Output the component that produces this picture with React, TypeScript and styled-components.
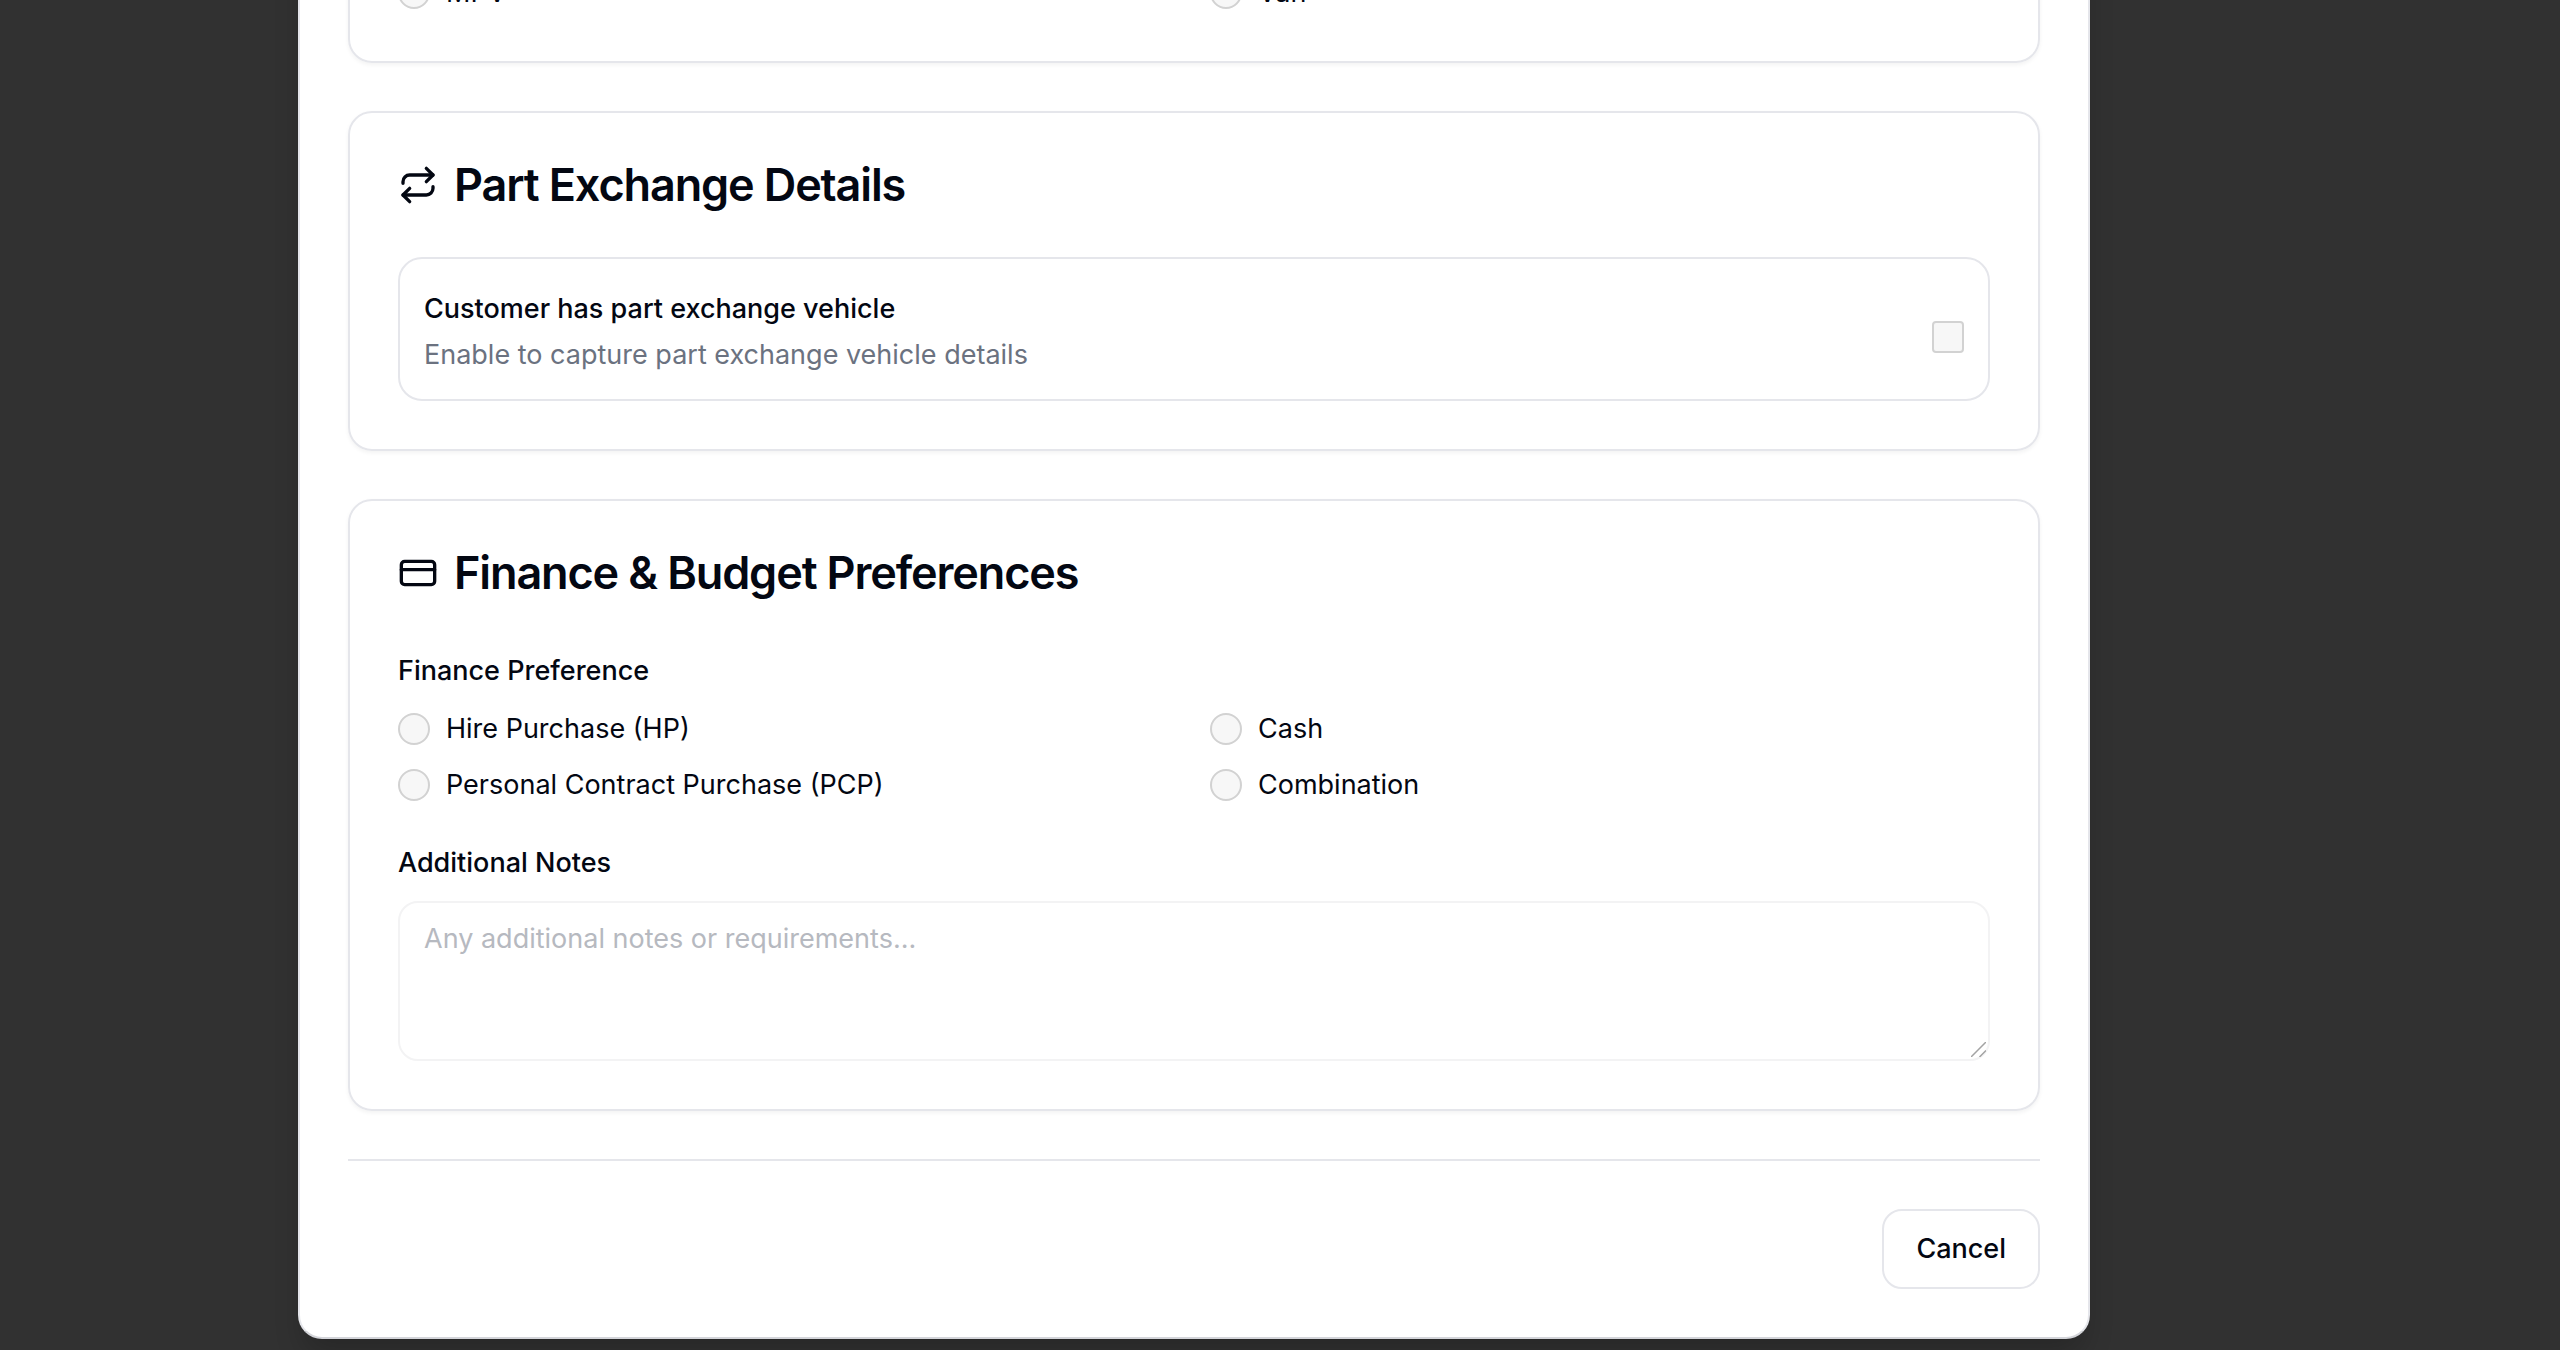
import React, { useId } from "react";
import styled, { createGlobalStyle } from "styled-components";
import { CreditCard, Repeat } from "lucide-react";

const colors = {
  text: "#030712",
  muted: "#6b7280",
  placeholder: "#b6b9c0",
  border: "#e5e6eb",
  dialogEdge: "#d4d5da",
  inputBorder: "#f3f3f4",
  controlBorder: "#d2d2d2",
  controlFill: "#f7f7f7",
};

const GlobalStyle = createGlobalStyle`
  *, *::before, *::after { box-sizing: border-box; }
  body {
    margin: 0;
    background: #313131;
    color: ${colors.text};
    font-family: Inter, "Liberation Sans", sans-serif;
    font-size: 27px;
    line-height: 40px;
    -webkit-font-smoothing: antialiased;
  }
`;

const Overlay = styled.div`
  height: 100vh;
  overflow: hidden;
  display: flex;
  justify-content: center;
  align-items: flex-end;
  padding: 0 172px 11px 0;
`;

const Dialog = styled.form`
  width: 100%;
  max-width: 1792px;
  display: flex;
  flex-direction: column;
  gap: 48px;
  padding: 48px;
  background: #fff;
  border: 2px solid ${colors.border};
  border-bottom-color: ${colors.dialogEdge};
  border-radius: 24px;
  box-shadow: 0 20px 30px -6px rgba(0, 0, 0, 0.2);
`;

const Card = styled.section`
  display: flex;
  flex-direction: column;
  gap: 48px;
  padding: 48px;
  border: 2px solid ${colors.border};
  border-radius: 24px;
  box-shadow: 0 2px 4px rgba(0, 0, 0, 0.05);
`;

const CardTitle = styled.h3`
  display: flex;
  align-items: center;
  gap: 16px;
  margin: 0;
  font-size: 45px;
  line-height: 48px;
  font-weight: 600;
  letter-spacing: -0.025em;
`;

const Fields = styled.div`
  display: flex;
  flex-direction: column;
  gap: 32px;
`;

const Field = styled.div`
  display: flex;
  flex-direction: column;
  gap: 12px;
`;

const Label = styled.label`
  font-weight: 500;
  line-height: 52px;
`;

const ToggleRow = styled.div`
  display: flex;
  align-items: center;
  justify-content: space-between;
  padding: 24px;
  border: 2px solid ${colors.border};
  border-radius: 24px;
`;

const ToggleText = styled.div`
  display: flex;
  flex-direction: column;
`;

const Description = styled.p`
  margin: 0;
  color: ${colors.muted};
`;

const Checkbox = styled.input`
  appearance: none;
  width: 32px;
  height: 32px;
  margin: 16px 0 0;
  border: 2px solid ${colors.controlBorder};
  border-radius: 4px;
  background: ${colors.controlFill};
  &:checked { background: ${colors.text}; }
`;

const OptionGrid = styled.div`
  display: grid;
  grid-template-columns: 1fr 1fr;
  gap: 16px 32px;
`;

const OptionLabel = styled.label`
  display: flex;
  align-items: center;
  gap: 16px;
`;

const Radio = styled.input`
  appearance: none;
  width: 32px;
  height: 32px;
  margin: 0;
  border: 2px solid ${colors.controlBorder};
  border-radius: 50%;
  background: ${colors.controlFill};
  &:checked { border: 10px solid ${colors.text}; }
`;

const NotesBox = styled.div`
  position: relative;
  display: flex;
`;

const Notes = styled.textarea`
  flex: 1;
  height: 160px;
  padding: 16px 24px;
  border: 2px solid ${colors.inputBorder};
  border-radius: 20px;
  background: transparent;
  color: inherit;
  font: inherit;
  resize: none;
  &::placeholder { color: ${colors.placeholder}; opacity: 1; }
`;

const Grip = styled.svg`
  position: absolute;
  right: 4px;
  bottom: 4px;
  pointer-events: none;
`;

const Footer = styled.footer`
  display: flex;
  justify-content: flex-end;
  padding-top: 48px;
  border-top: 2px solid ${colors.border};
`;

const Button = styled.button`
  height: 80px;
  padding: 0 32px;
  border: 2px solid ${colors.border};
  border-radius: 20px;
  background: #fff;
  color: inherit;
  font: inherit;
  font-weight: 500;
`;

function Options({ name, items, label }: { name: string; items: string[]; label: string }) {
  return (
    <OptionGrid role="radiogroup" aria-label={label}>
      {items.map((item) => (
        <OptionLabel key={item}>
          <Radio type="radio" name={name} value={item} />
          {item}
        </OptionLabel>
      ))}
    </OptionGrid>
  );
}

export default function App() {
  const exchangeId = useId();
  const notesId = useId();
  return (
    <>
      <GlobalStyle />
      <Overlay>
        <Dialog>
          <Card>
            <Options name="body" label="Body" items={["MPV", "Van"]} />
          </Card>

          <Card>
            <CardTitle>
              <Repeat size={40} />
              Part Exchange Details
            </CardTitle>
            <ToggleRow>
              <ToggleText>
                <Label htmlFor={exchangeId}>Customer has part exchange vehicle</Label>
                <Description>Enable to capture part exchange vehicle details</Description>
              </ToggleText>
              <Checkbox id={exchangeId} type="checkbox" />
            </ToggleRow>
          </Card>

          <Card>
            <CardTitle>
              <CreditCard size={40} />
              Finance &amp; Budget Preferences
            </CardTitle>
            <Fields>
              <Field>
                <Label as="div">Finance Preference</Label>
                <Options
                  name="finance"
                  label="Finance Preference"
                  items={["Hire Purchase (HP)", "Cash", "Personal Contract Purchase (PCP)", "Combination"]}
                />
              </Field>
              <Field>
                <Label htmlFor={notesId}>Additional Notes</Label>
                <NotesBox>
                  <Notes id={notesId} placeholder="Any additional notes or requirements..." />
                  <Grip width="15" height="15" viewBox="0 0 15 15" stroke="#a3a3a3" strokeWidth="1.5" aria-hidden>
                    <path d="M0 15 15 0M8.5 15 15 8.5" />
                  </Grip>
                </NotesBox>
              </Field>
            </Fields>
          </Card>

          <Footer>
            <Button type="button">Cancel</Button>
          </Footer>
        </Dialog>
      </Overlay>
    </>
  );
}
